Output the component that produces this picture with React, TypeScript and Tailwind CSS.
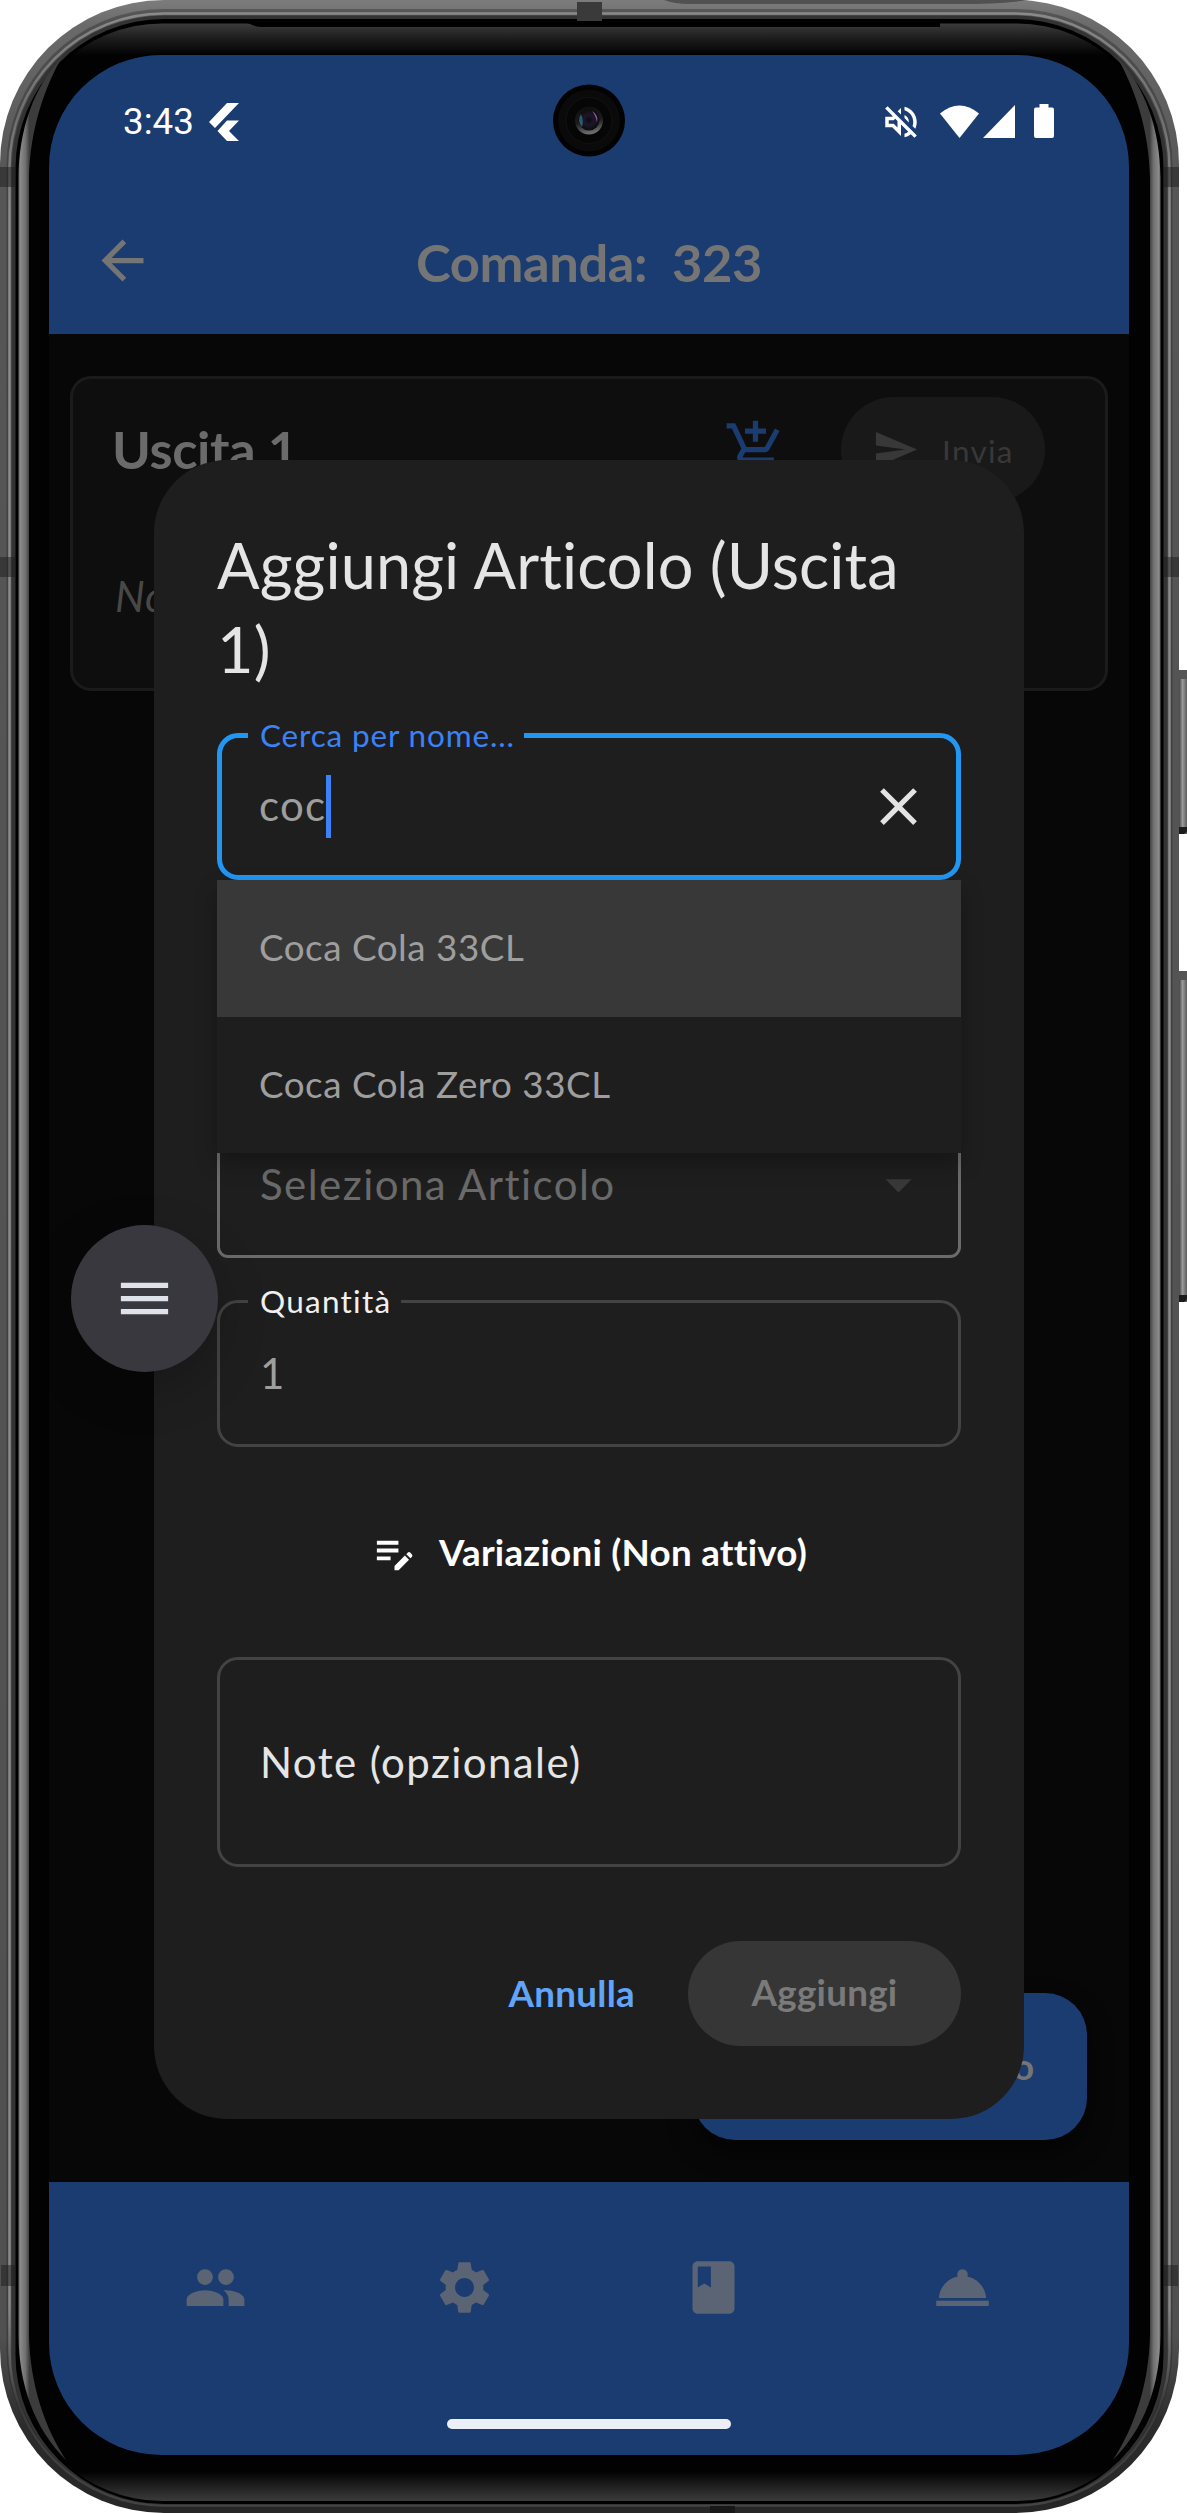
import type { ReactNode } from "react";
import {
  MdAddShoppingCart,
  MdArrowBack,
  MdArrowDropDown,
  MdClass,
  MdClose,
  MdEditNote,
  MdMenu,
  MdOutlineVolumeOff,
  MdPeople,
  MdRoomService,
  MdSend,
  MdSettings,
} from "react-icons/md";

const suggestions = ["Coca Cola 33CL", "Coca Cola Zero 33CL"];

function PhoneFrame() {
  const highlight =
    "M18.5 178 C19 130 33 88 62 57 C45 87 30 128 29 178 L29 2335 C30 2385 45 2428 66 2460 C34 2428 19 2385 18.5 2335 Z";
  return (
    <svg className="absolute inset-0" width="1187" height="2513" viewBox="0 0 1187 2513" fill="none">
      <defs>
        <linearGradient id="body" x1="0" y1="0" x2="0" y2="1">
          <stop offset="0" stopColor="#7c7c7c" />
          <stop offset="0.01" stopColor="#6a6a6a" />
          <stop offset="0.07" stopColor="#565656" />
          <stop offset="0.93" stopColor="#505050" />
          <stop offset="0.965" stopColor="#2c2c2c" />
          <stop offset="1" stopColor="#262626" />
        </linearGradient>
        <linearGradient id="rim" x1="0" y1="0" x2="0" y2="1">
          <stop offset="0" stopColor="#8a8a8a" />
          <stop offset="0.04" stopColor="#6e6e6e" />
          <stop offset="0.08" stopColor="#8c8c8c" />
          <stop offset="0.92" stopColor="#8a8a8a" />
          <stop offset="0.96" stopColor="#3a3a3a" />
          <stop offset="1" stopColor="#444444" />
        </linearGradient>
        <linearGradient id="bezel" x1="0" y1="23" x2="0" y2="2504" gradientUnits="userSpaceOnUse">
          <stop offset="0" stopColor="#3c3c3c" />
          <stop offset="0.006" stopColor="#1e1e1e" />
          <stop offset="0.013" stopColor="#020202" />
          <stop offset="0.987" stopColor="#020202" />
          <stop offset="0.995" stopColor="#2a2a2a" />
          <stop offset="1" stopColor="#404040" />
        </linearGradient>
        <linearGradient id="side" x1="18" y1="0" x2="29.5" y2="0" gradientUnits="userSpaceOnUse">
          <stop offset="0" stopColor="#5a5a5a" />
          <stop offset="0.2" stopColor="#8a8a8a" />
          <stop offset="0.65" stopColor="#707070" />
          <stop offset="1" stopColor="#3c3c3c" />
        </linearGradient>
        <linearGradient id="key" x1="1178" y1="0" x2="1187" y2="0" gradientUnits="userSpaceOnUse">
          <stop offset="0" stopColor="#2a2a2a" />
          <stop offset="0.5" stopColor="#9a9a9a" />
          <stop offset="1" stopColor="#5c5c5c" />
        </linearGradient>
      </defs>
      <rect x="1174" y="670" width="16" height="164" rx="3" fill="url(#key)" />
      <rect x="1174" y="971" width="16" height="331" rx="3" fill="url(#key)" />
      <path d="M1179 827h8v4q-1 3-4 3h-4zM1179 1295h8v4q-1 3-4 3h-4z" fill="#1c1c1c" />
      <path d="M1179 670h8v9h-8zM1179 971h8v9h-8z" fill="#555555" />
      <rect x="0" y="0" width="1179" height="2513" rx="164" fill="url(#body)" />
      <rect x="6.5" y="9" width="1166" height="2497" rx="157" fill="#202020" fillOpacity="0.35" />
      <rect x="9.5" y="13.5" width="1160" height="2492" rx="154" stroke="url(#rim)" strokeWidth="2.5" />
      <rect x="12" y="15.5" width="1155" height="2489" rx="152" fill="#333333" />
      <rect x="15.5" y="19" width="1148" height="2485" rx="149" fill="#000000" />
      <rect x="18" y="23.5" width="1143" height="2477.5" rx="144" fill="url(#bezel)" />
      <path d="M240 21 H940 V27 H262 Q256 27 250 24 Z" fill="#000000" />
      <path d="M960 23 H920 Q926 24 918 27 H900 V21 H960 Z" fill="#000000" />
      <path d={highlight} fill="url(#side)" />
      <path d={highlight} fill="url(#side)" transform="translate(1179 0) scale(-1 1)" />
      <path d="M664 0 H1030 Q1000 4 960 4 H690 Q674 4 664 0Z" fill="#515151" />
      <rect x="577" y="2" width="25" height="19" fill="#3a3a3a" />
      <rect x="710" y="2506" width="25" height="7" fill="#181818" />
      <path
        d="M0 167h16v20H0zM1163 167h16v20h-16zM0 557h16v20H0zM1163 557h16v20h-16zM1 2265h15v21H1zM1163 2265h15v21h-15z"
        fill="#1c1c1c"
        fillOpacity="0.5"
      />
      <rect x="48.5" y="53.5" width="1081" height="2402" rx="112" fill="#000000" />
    </svg>
  );
}

function FlutterLogo() {
  return (
    <svg width="31" height="38" viewBox="0 0 31 38" fill="#ffffff" className="ml-[15px]">
      <path d="M18 0h12L6 25 0 19zM18 17.500h12L20 28l10 10H18L8.500 28z" />
    </svg>
  );
}

function Camera() {
  return (
    <svg width="72" height="73" viewBox="0 0 72 73" className="absolute left-[504px] top-[29px]">
      <defs>
        <radialGradient id="lens" cx="0.5" cy="0.5" r="0.55">
          <stop offset="0" stopColor="#0b0a14" />
          <stop offset="0.45" stopColor="#1d1828" />
          <stop offset="1" stopColor="#08080c" />
        </radialGradient>
        <linearGradient id="ring" x1="0" y1="0" x2="0.2" y2="1">
          <stop offset="0" stopColor="#0c0c0c" />
          <stop offset="0.6" stopColor="#1c1c1c" />
          <stop offset="1" stopColor="#6a6a6a" />
        </linearGradient>
      </defs>
      <circle cx="36" cy="36.500" r="36" fill="#020202" />
      <circle cx="36" cy="36.500" r="31" fill="#0a0a0a" />
      <circle cx="36" cy="36.500" r="23" fill="#060606" stroke="#121212" />
      <circle cx="36" cy="36.500" r="14" fill="url(#ring)" />
      <circle cx="36" cy="36" r="10.500" fill="url(#lens)" />
      <path d="M28 30a10 10 0 0 0 1 13q2-6-1-13z" fill="#2c5a72" />
      <path d="M39 27a10 10 0 0 1 5 12q-1-7-5-12z" fill="#8a5aa0" />
    </svg>
  );
}

function StatusBar() {
  return (
    <div className="flex h-[132px] items-start justify-between pl-[74px] pr-[75px] pt-[48px]">
      <div className="flex items-center">
        <span className="font-['Roboto'] text-[36.75px] leading-[38px] text-white">3:43</span>
        <FlutterLogo />
      </div>
      <div className="-mt-0.5 flex items-center text-white">
        <MdOutlineVolumeOff size={42} className="mr-[18px]" />
        <svg width="39" height="33" viewBox="0 0 39 33" fill="currentColor" className="-mt-0.5 mr-1">
          <path d="M0 8.500Q19.500-7.500 39 8.500L19.500 33z" />
        </svg>
        <svg width="32" height="33" viewBox="0 0 32 33" fill="currentColor" className="-mt-0.5 mr-[19px]">
          <path d="M32 0v33H0z" />
        </svg>
        <svg width="20" height="34" viewBox="0 0 20 34" fill="currentColor" className="-mt-0.5">
          <path d="M5.500 0h9v3.500H18q2 0 2 2V32q0 2-2 2H2q-2 0-2-2V5.500q0-2 2-2h3.500z" />
        </svg>
      </div>
    </div>
  );
}

function AppHeader() {
  return (
    <header className="h-[279px] bg-[#1b3c71]">
      <StatusBar />
      <div className="grid h-[147px] grid-cols-[1fr_auto_1fr] items-center pl-[42px] pr-[42px] text-[#757575]">
        <MdArrowBack size={63} />
        <h1 className="whitespace-pre pt-0.5 text-[52.5px] leading-[63px] font-bold tracking-[-0.4px]">Comanda:  323</h1>
        <span />
      </div>
    </header>
  );
}

function CourseCard() {
  return (
    <section className="mx-[21px] mt-[42px] h-[315px] rounded-[21px] border-[3px] border-[#1b1b1b] bg-[#0e0e0e] px-[39px] pt-[18px]">
      <div className="flex h-[105px] items-center">
        <h2 className="flex-1 pb-0.5 text-[52.5px] leading-[63px] font-bold tracking-[-0.4px] text-[#6b6b6b]">Uscita 1</h2>
        <MdAddShoppingCart size={63} className="mr-[54px] text-[#1b3c71]" />
        <div className="mr-[21px] flex h-[105px] w-[204px] items-center rounded-full bg-[#191919] pl-[31px] text-[#383838]">
          <MdSend size={47} />
          <span className="ml-[23px] pt-0.5 text-[31.5px] leading-[42px] tracking-[1.3px]">Invia</span>
        </div>
      </div>
      <p className="pl-[3px] pt-[63px] text-[42px] leading-[63px] italic tracking-[0.7px] text-[#484848]">No</p>
    </section>
  );
}

function BottomNav() {
  return (
    <nav className="flex h-[273px] flex-col items-center justify-between bg-[#1b3c71] pb-[26px]">
      <div className="flex h-[210px] w-[997px] items-center justify-around text-[#5b6474]">
        <MdPeople size={63} />
        <MdSettings size={63} />
        <MdClass size={63} />
        <MdRoomService size={63} />
      </div>
      <div className="h-[10px] w-[284px] rounded-full bg-[#ecf0f6]" />
    </nav>
  );
}

function FieldLabel({ className, children }: { className: string; children: ReactNode }) {
  return (
    <span className={`absolute whitespace-nowrap bg-[#1e1e1e] text-[31.5px] leading-[38px] ${className}`}>
      {children}
    </span>
  );
}

function SearchField() {
  return (
    <div className="relative flex h-[147px] items-center justify-between rounded-[21px] border-[5px] border-[#2196f3] pl-[37px] pr-[26px]">
      <FieldLabel className="-top-[22px] left-[26px] w-[276px] pl-[12px] tracking-[0.85px] text-[#3b82f6]">
        Cerca per nome...
      </FieldLabel>
      <div className="flex items-center">
        <span className="pb-0.5 text-[42px] leading-[63px] tracking-[1.3px] text-[#9e9e9e]">coc</span>
        <span className="h-[63px] w-[5px] bg-[#3b82f6]" />
      </div>
      <MdClose size={63} className="text-[#e3e3e3]" />
      <ul className="absolute -left-[5px] top-[142px] z-10 w-[744px] bg-[#1e1e1e] shadow-[0_10px_20px_rgba(0,0,0,0.28)]">
        {suggestions.map((name, index) => (
          <li
            key={name}
            className={`flex h-[136.500px] items-center pb-0.5 pl-[42px] text-[36.75px] leading-[52px] tracking-[0.55px] text-[#9e9e9e] ${
              index === 0 ? "bg-[#383838]" : ""
            }`}
          >
            {name}
          </li>
        ))}
      </ul>
    </div>
  );
}

function AddItemDialog() {
  return (
    <div className="absolute left-[105px] top-[405px] flex h-[1659px] w-[870px] flex-col rounded-[73px] bg-[#1e1e1e] p-[63px]">
      <h2 className="mb-[42px] text-[63px] leading-[84px] tracking-[0.13px] text-[#e5e5e5]">
        Aggiungi Articolo (Uscita 1)
      </h2>
      <SearchField />
      <div className="mt-[231px] flex h-[147px] items-center justify-between rounded-[11px] border-[3px] border-[#6b6b6b] pl-[40px] pr-[28px]">
        <span className="pb-px text-[42px] leading-[63px] tracking-[1.45px] text-[#6a6a6a]">Seleziona Articolo</span>
        <MdArrowDropDown size={63} className="text-[#383838]" />
      </div>
      <div className="relative mt-[42px] flex h-[147px] items-center rounded-[21px] border-[3px] border-[#434343] pl-[40px]">
        <FieldLabel className="-top-[21px] left-[28px] w-[153px] pl-[12px] tracking-[1.25px] text-[#f0f0f0]">
          Quantità
        </FieldLabel>
        <span className="text-[42px] leading-[63px] tracking-[1.3px] text-[#9e9e9e]">1</span>
      </div>
      <div className="flex h-[210px] items-center justify-center gap-[21px] text-white">
        <MdEditNote size={47} />
        <span className="text-[36.75px] leading-[52px] font-bold tracking-[0.26px]">Variazioni (Non attivo)</span>
      </div>
      <div className="flex h-[210px] items-center rounded-[21px] border-[3px] border-[#434343] pl-[40px]">
        <span className="text-[42px] leading-[63px] tracking-[1.4px] text-[#e5e5e5]">Note (opzionale)</span>
      </div>
      <div className="mt-[74px] flex h-[105px] shrink-0 items-center justify-end gap-[53px] text-[36.75px] leading-[52px] font-bold tracking-[0.26px]">
        <span className="pb-px text-[#60a5fa]">Annulla</span>
        <span className="flex h-[105px] w-[273px] items-center justify-center rounded-full bg-[#363636] pb-[3px] text-[#7a7a7a]">
          Aggiungi
        </span>
      </div>
    </div>
  );
}

export default function App() {
  return (
    <div className="relative h-[2513px] w-[1187px] overflow-hidden bg-white font-['Lato',sans-serif] [font-variant-ligatures:none]">
      <PhoneFrame />
      <div className="relative ml-[49px] mt-[55px] flex h-[2400px] w-[1080px] flex-col overflow-hidden rounded-[112px] bg-[#070707]">
        <AppHeader />
        <main className="flex-1">
          <CourseCard />
        </main>
        <BottomNav />
        <div className="absolute left-[644px] top-[1938px] flex h-[147px] w-[394px] items-center justify-end rounded-[42px] bg-[#1b3c71] pr-[53px] text-[36.75px] font-bold text-[#757575] shadow-[0_12px_24px_rgba(0,0,0,0.6)]">
          o
        </div>
        <AddItemDialog />
        <div className="absolute left-[21.500px] top-[1170px] flex size-[147px] items-center justify-center rounded-full bg-[#38383e] text-[#dfe2ea] shadow-[0_16px_50px_rgba(0,0,0,0.22)]">
          <MdMenu size={63} />
        </div>
        <Camera />
      </div>
    </div>
  );
}
